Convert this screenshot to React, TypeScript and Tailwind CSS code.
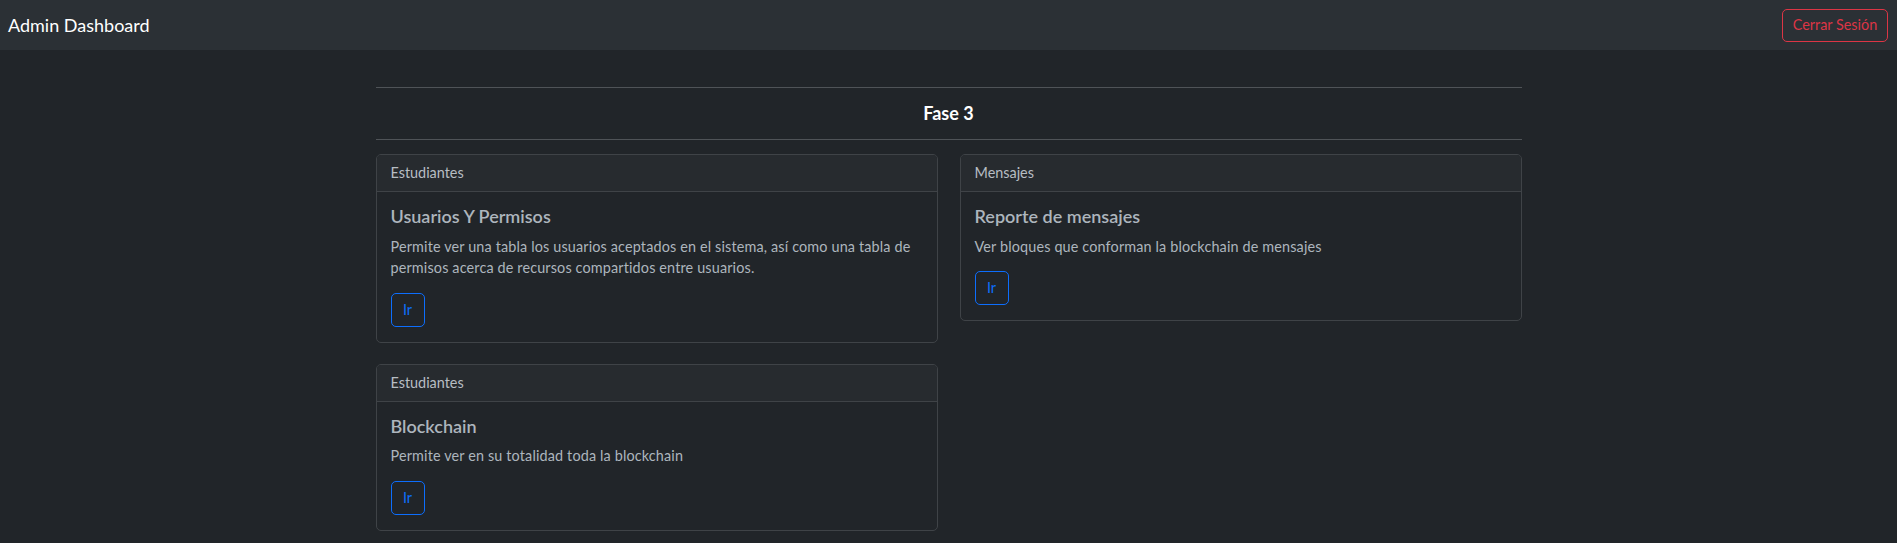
import React from "react";

const font = {
  fontFamily: '"Segoe UI", Lato, "Liberation Sans", sans-serif',
};

type CardProps = {
  header: string;
  title: string;
  text: string;
};

function DashCard({ header, title, text }: CardProps) {
  return (
    <div className="border border-[#3f4347] rounded-[5px] overflow-hidden">
      <div className="h-[37px] flex items-center px-[14px] bg-[#272b2f] border-b border-[#3f4347] text-[14.4px] text-[#b7bdc3]">
        {header}
      </div>
      <div className="pt-[14px] pb-[15px] px-[14px] text-[#adb5bd]">
        <h5 className="text-[18px] leading-[21.6px] font-semibold mb-[8px]">{title}</h5>
        <p className="text-[14.4px] leading-[21.6px] tracking-[0.15px] mb-[14px]">{text}</p>
        <button className="h-[34px] w-[34px] border border-[#0d6efd] text-[#0d6efd] rounded-[5px] text-[14.4px] leading-[21.6px]">
          Ir
        </button>
      </div>
    </div>
  );
}

export default function App() {
  return (
    <div className="min-h-screen bg-[#212529] text-[#dee2e6]" style={font}>
      {/* Navbar */}
      <nav className="h-[50px] bg-[#2b3035] flex items-center justify-between pl-2 pr-[9px]">
        <span className="text-[18px] text-white">Admin Dashboard</span>
        <button className="h-[33px] w-[106px] border border-[#dc3545] text-[#dc3545] rounded-[5px] text-[14.4px]">
          Cerrar Sesión
        </button>
      </nav>

      {/* Content */}
      <main className="w-[1146px] mx-auto pt-[37px]">
        <hr className="border-0 border-t border-[#4f5357]" />
        <div className="h-[51px] flex items-center justify-center">
          <h5 className="text-[18px] font-bold text-white">Fase 3</h5>
        </div>
        <hr className="border-0 border-t border-[#4f5357]" />

        <div className="mt-[14px] grid grid-cols-[562px_562px] gap-x-[22px] gap-y-[21px] items-start">
          <DashCard
            header="Estudiantes"
            title="Usuarios Y Permisos"
            text="Permite ver una tabla los usuarios aceptados en el sistema, así como una tabla de permisos acerca de recursos compartidos entre usuarios."
          />
          <DashCard
            header="Mensajes"
            title="Reporte de mensajes"
            text="Ver bloques que conforman la blockchain de mensajes"
          />
          <DashCard
            header="Estudiantes"
            title="Blockchain"
            text="Permite ver en su totalidad toda la blockchain"
          />
        </div>
      </main>
    </div>
  );
}
